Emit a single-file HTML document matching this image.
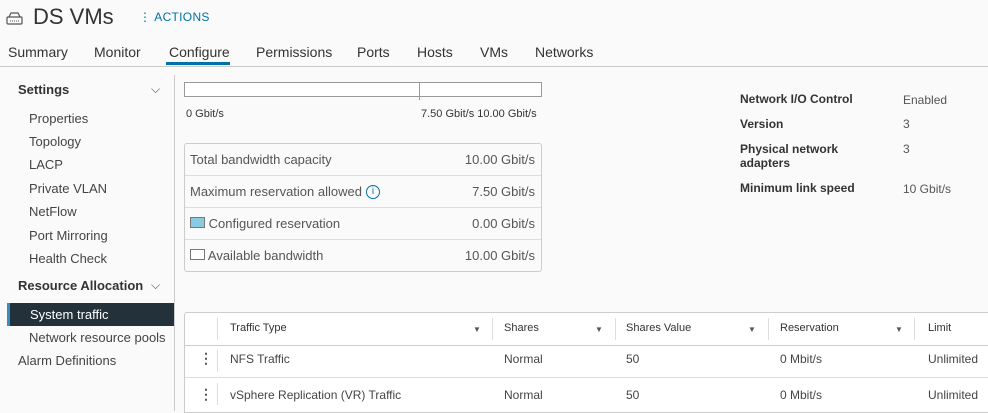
<!DOCTYPE html><html><head><style>
body{margin:0;width:988px;height:411px;overflow:hidden;background:#fafafa;font-family:"Liberation Sans",sans-serif;color:#333;position:relative}
.a{position:absolute;white-space:nowrap}
.s{font-size:13px;color:#444}
.t{font-size:14px;color:#333}
.sm{font-size:11px;color:#333}
.row{position:absolute;left:185px;width:356px;height:31px;border-top:1px solid #ddd;font-size:13px;color:#555}
.row span{position:absolute;top:8px}
.th{font-size:11px;color:#333}
.vl{position:absolute;width:1px;background:#ddd}
.fil{position:absolute;font-size:8px;color:#555}
</style></head><body>
<div style="position:absolute;left:0;top:0;width:988px;height:66px;background:#fafafa;border-bottom:1px solid #ccc"></div>
<svg class="a" style="left:6px;top:11px" width="18" height="15"><rect x="1" y="6" width="15" height="7" rx="1" fill="none" stroke="#555" stroke-width="1.2"/><path d="M3 6 L5 2 H12 L14 6" fill="none" stroke="#555" stroke-width="1.2"/><path d="M4 10h1M6 10h1M8 10h1M10 10h1M12 10h1" stroke="#555"/></svg>
<div class="a" style="left:33px;top:4px;font-size:22px;color:#333">DS VMs</div>
<div class="a" style="left:139px;top:10px;font-size:12px;color:#0072a3;letter-spacing:.3px">⋮ ACTIONS</div>
<div class="a t" style="left:8px;top:44px">Summary</div>
<div class="a t" style="left:94px;top:44px">Monitor</div>
<div class="a t" style="left:169px;top:44px">Configure</div>
<div class="a" style="left:166px;top:62px;width:64px;height:3px;background:#0072a3"></div>
<div class="a t" style="left:256px;top:44px">Permissions</div>
<div class="a t" style="left:357px;top:44px">Ports</div>
<div class="a t" style="left:417px;top:44px">Hosts</div>
<div class="a t" style="left:480px;top:44px">VMs</div>
<div class="a t" style="left:535px;top:44px">Networks</div>
<div class="a" style="left:174px;top:75px;width:1px;height:336px;background:#ccc"></div>
<div class="a" style="left:18px;top:82px;font-size:13px;font-weight:bold;color:#333">Settings</div>
<div class="a" style="left:151px;top:82px;font-size:12px;color:#555">⌵</div>
<div class="a s" style="left:29px;top:111px">Properties</div>
<div class="a s" style="left:29px;top:134px">Topology</div>
<div class="a s" style="left:29px;top:157px">LACP</div>
<div class="a s" style="left:29px;top:181px">Private VLAN</div>
<div class="a s" style="left:29px;top:204px">NetFlow</div>
<div class="a s" style="left:29px;top:228px">Port Mirroring</div>
<div class="a s" style="left:29px;top:251px">Health Check</div>
<div class="a" style="left:18px;top:278px;font-size:13px;font-weight:bold;color:#333">Resource Allocation</div>
<div class="a" style="left:151px;top:278px;font-size:12px;color:#555">⌵</div>
<div class="a" style="left:7px;top:303px;width:167px;height:23px;background:#22313a;border-left:3px solid #3a8dc0;box-sizing:border-box"></div>
<div class="a" style="left:30px;top:307px;font-size:13px;color:#fff">System traffic</div>
<div class="a s" style="left:29px;top:330px">Network resource pools</div>
<div class="a s" style="left:18px;top:353px">Alarm Definitions</div>
<div class="a" style="left:184px;top:82px;width:356px;height:13px;border:1px solid #999;background:#fff"></div>
<div class="a" style="left:419px;top:82px;width:1px;height:18px;background:#999"></div>
<div class="a sm" style="left:186px;top:108px">0 Gbit/s</div>
<div class="a sm" style="left:421px;top:108px">7.50 Gbit/s 10.00 Gbit/s</div>
<div class="a" style="left:184px;top:143px;width:356px;height:127px;border:1px solid #ccc;border-radius:3px;background:#fafafa"></div>
<div class="row" style="top:144px;border-top:none"><span style="left:5px">Total bandwidth capacity</span><span style="right:6px">10.00 Gbit/s</span></div>
<div class="row" style="top:175px"><span style="left:5px">Maximum reservation allowed</span><span style="left:181px;top:9px;width:12px;height:12px;border:1.3px solid #0072a3;border-radius:50%;font-size:10px;line-height:12px;text-align:center;color:#0072a3">i</span><span style="right:6px">7.50 Gbit/s</span></div>
<div class="row" style="top:207px"><span style="left:5px"><span style="position:static;display:inline-block;width:13px;height:9px;background:#89cbdf;border:1px solid #777;vertical-align:0"></span> Configured reservation</span><span style="right:6px">0.00 Gbit/s</span></div>
<div class="row" style="top:239px"><span style="left:5px"><span style="position:static;display:inline-block;width:13px;height:9px;background:#fff;border:1px solid #777;vertical-align:0"></span> Available bandwidth</span><span style="right:6px">10.00 Gbit/s</span></div>
<div class="a" style="left:740px;top:92px;font-size:12px;font-weight:bold;color:#333">Network I/O Control</div>
<div class="a" style="left:903px;top:93px;font-size:12px;color:#555">Enabled</div>
<div class="a" style="left:740px;top:117px;font-size:12px;font-weight:bold;color:#333">Version</div>
<div class="a" style="left:903px;top:117px;font-size:12px;color:#555">3</div>
<div class="a" style="left:740px;top:142px;font-size:12px;font-weight:bold;color:#333;line-height:14px">Physical network<br>adapters</div>
<div class="a" style="left:903px;top:142px;font-size:12px;color:#555">3</div>
<div class="a" style="left:740px;top:181px;font-size:12px;font-weight:bold;color:#333">Minimum link speed</div>
<div class="a" style="left:903px;top:182px;font-size:12px;color:#555">10 Gbit/s</div>
<div class="a" style="left:184px;top:312px;width:810px;height:99px;border:1px solid #ccc;border-radius:3px 0 0 0;background:#fff"></div>
<div class="a" style="left:185px;top:345px;width:803px;height:1px;background:#ccc"></div>
<div class="a" style="left:185px;top:377px;width:803px;height:1px;background:#ddd"></div>
<div class="vl" style="left:217px;top:318px;height:22px"></div>
<div class="vl" style="left:492px;top:318px;height:22px"></div>
<div class="vl" style="left:615px;top:318px;height:22px"></div>
<div class="vl" style="left:768px;top:318px;height:22px"></div>
<div class="vl" style="left:914px;top:318px;height:22px"></div>
<div class="vl" style="left:217px;top:350px;height:22px"></div>
<div class="vl" style="left:217px;top:383px;height:22px"></div>
<div class="a th" style="left:230px;top:322px">Traffic Type</div>
<div class="a th" style="left:504px;top:322px">Shares</div>
<div class="a th" style="left:626px;top:322px">Shares Value</div>
<div class="a th" style="left:780px;top:322px">Reservation</div>
<div class="a th" style="left:928px;top:322px">Limit</div>
<div class="fil" style="left:473px;top:325px">▼</div>
<div class="fil" style="left:595px;top:325px">▼</div>
<div class="fil" style="left:748px;top:325px">▼</div>
<div class="fil" style="left:895px;top:325px">▼</div>
<div class="a" style="left:199px;top:350px;font-size:14px;color:#555;font-weight:bold">⋮</div>
<div class="a" style="left:199px;top:386px;font-size:14px;color:#555;font-weight:bold">⋮</div>
<div class="a s" style="left:230px;top:352px;font-size:12px">NFS Traffic</div>
<div class="a s" style="left:504px;top:352px;font-size:12px">Normal</div>
<div class="a s" style="left:626px;top:352px;font-size:12px">50</div>
<div class="a s" style="left:780px;top:352px;font-size:12px">0 Mbit/s</div>
<div class="a s" style="left:928px;top:352px;font-size:12px">Unlimited</div>
<div class="a s" style="left:230px;top:388px;font-size:12px">vSphere Replication (VR) Traffic</div>
<div class="a s" style="left:504px;top:388px;font-size:12px">Normal</div>
<div class="a s" style="left:626px;top:388px;font-size:12px">50</div>
<div class="a s" style="left:780px;top:388px;font-size:12px">0 Mbit/s</div>
<div class="a s" style="left:928px;top:388px;font-size:12px">Unlimited</div>
</body></html>
